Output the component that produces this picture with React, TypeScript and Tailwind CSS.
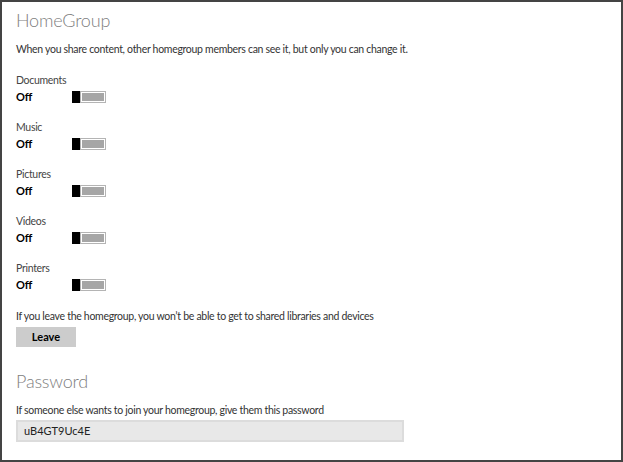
import React from 'react';

const items = ['Documents', 'Music', 'Pictures', 'Videos', 'Printers'];

const Toggle: React.FC = () => (
  <div className="flex h-[12px] w-[34px]">
    <div className="h-full w-[8px] bg-black" />
    <div className="h-full flex-1 border border-[#b4b4b4] bg-white p-px">
      <div className="h-full w-full bg-[#a6a6a6]" />
    </div>
  </div>
);

export default function App() {
  return (
    <div
      className="box-border h-[462px] w-[623px] border-2 border-[#444] bg-white pl-[14px] pt-[6px] text-[#333]"
      style={{ fontFamily: 'Lato, "Open Sans", sans-serif' }}
    >
      <div className="text-[18px] font-light leading-[24px] tracking-[-0.2px] text-[#808080]">HomeGroup</div>
      <div className="mt-[10px] text-[10.5px] leading-[14px] tracking-[-0.3px]">
        When you share content, other homegroup members can see it, but only you can change it.
      </div>

      <div className="mt-[17px] flex flex-col gap-[16px]">
        {items.map((label) => (
          <div key={label} className="flex flex-col gap-[3px]">
            <div className="text-[10.5px] leading-[14px] tracking-[-0.3px] text-[#444]">{label}</div>
            <div className="flex h-[14px] items-center">
              <span className="w-[56px] text-[11px] font-bold leading-[14px] text-black">Off</span>
              <Toggle />
            </div>
          </div>
        ))}
      </div>

      <div className="mt-[17px] text-[10.5px] leading-[14px] tracking-[-0.3px]">
        If you leave the homegroup, you won’t be able to get to shared libraries and devices
      </div>
      <button className="mt-[4px] flex h-[20px] w-[60px] items-center justify-center bg-[#cccccc] text-[11px] font-bold text-black">
        Leave
      </button>

      <div className="mt-[22px] text-[18px] font-light leading-[24px] tracking-[-0.2px] text-[#808080]">Password</div>
      <div className="mt-[10px] text-[10.5px] leading-[14px] tracking-[-0.3px]">
        If someone else wants to join your homegroup, give them this password
      </div>
      <div className="mt-[3px] box-border flex h-[22px] w-[388px] items-center border-2 border-[#dcdcdc] bg-[#e8e8e8] pl-[6px] text-[11px] text-[#222]">
        uB4GT9Uc4E
      </div>
    </div>
  );
}
